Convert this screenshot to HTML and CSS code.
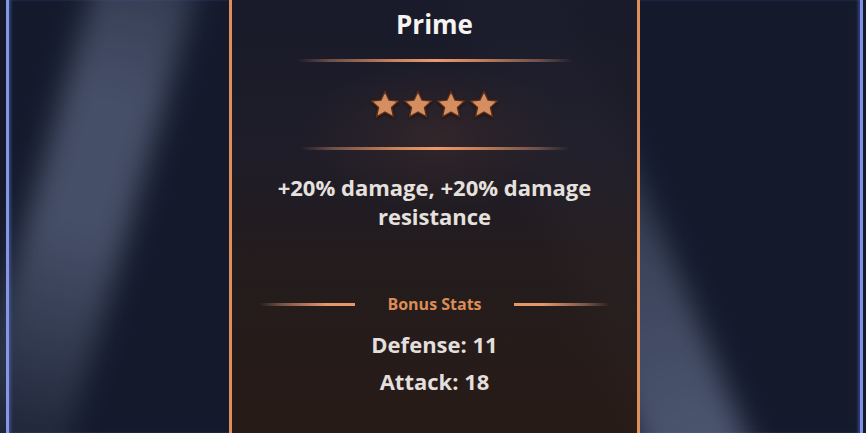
FILE: index.html
```html
<!DOCTYPE html>
<html>
<head>
<meta charset="utf-8">
<link rel="stylesheet" href="styles.css">
</head>
<body>
<div class="stage">
  <div class="beam beam-left"></div>
  <div class="beam beam-right"></div>
  <div class="frame">
    <div class="card">
      <div class="glow"></div>
      <h1 class="title">Prime</h1>
      <div class="divider"></div>
      <div class="stars">
        <svg class="star" viewBox="0 0 32 31"><polygon points="16,1.5 20.4,10.8 30.5,11.8 22.9,18.7 25.2,28.8 16,23.6 6.8,28.8 9.1,18.7 1.5,11.8 11.6,10.8"/></svg>
        <svg class="star" viewBox="0 0 32 31"><polygon points="16,1.5 20.4,10.8 30.5,11.8 22.9,18.7 25.2,28.8 16,23.6 6.8,28.8 9.1,18.7 1.5,11.8 11.6,10.8"/></svg>
        <svg class="star" viewBox="0 0 32 31"><polygon points="16,1.5 20.4,10.8 30.5,11.8 22.9,18.7 25.2,28.8 16,23.6 6.8,28.8 9.1,18.7 1.5,11.8 11.6,10.8"/></svg>
        <svg class="star" viewBox="0 0 32 31"><polygon points="16,1.5 20.4,10.8 30.5,11.8 22.9,18.7 25.2,28.8 16,23.6 6.8,28.8 9.1,18.7 1.5,11.8 11.6,10.8"/></svg>
      </div>
      <div class="divider divider-2"></div>
      <p class="desc">+20% damage, +20% damage resistance</p>
      <div class="bonus-head">
        <span class="bline bline-left"></span>
        <span class="bonus-label">Bonus Stats</span>
        <span class="bline bline-right"></span>
      </div>
      <div class="stat">Defense: 11</div>
      <div class="stat">Attack: 18</div>
    </div>
  </div>
</div>
</body>
</html>
```
FILE: styles.css
```css
* { box-sizing: border-box; }
html, body {
  margin: 0;
  padding: 0;
  background: #131a2b;
  overflow: hidden;
}
.stage {
  position: relative;
  width: 866px;
  height: 433px;
  overflow: hidden;
  background: #141a2c;
  font-family: "Open Sans", "Noto Sans", sans-serif;
}
.beam {
  position: absolute;
  pointer-events: none;
  filter: blur(14px);
}
.beam-left {
  left: 30px;
  top: -134px;
  width: 100px;
  height: 700px;
  transform: rotate(16deg);
  background: linear-gradient(180deg, rgba(110,120,150,0) 4%, rgba(110,122,152,0.4) 18%, rgba(110,122,152,0.55) 32%, rgba(110,122,152,0.55) 52%, rgba(110,122,152,0.32) 70%, rgba(110,122,152,0.05) 88%);
}
.beam-right {
  left: 550px;
  top: -134px;
  width: 100px;
  height: 700px;
  transform: rotate(-22.6deg);
  background: linear-gradient(180deg, rgba(110,122,152,0.1) 0%, rgba(110,122,152,0.16) 30%, rgba(110,122,152,0.45) 60%, rgba(110,122,152,0.62) 85%, rgba(110,122,152,0.62) 100%);
}
.frame {
  position: relative;
  margin-left: 6px;
  width: 857px;
  height: 433px;
  border-left: 3px solid #8598e6;
  border-right: 3px solid #7d92e4;
  box-shadow: inset 3px 0 3px -1px rgba(90,115,210,0.45), inset -3px 0 3px -1px rgba(90,115,210,0.45);
  display: flex;
  justify-content: center;
}
.card {
  position: relative;
  width: 411px;
  height: 433px;
  border-left: 3px solid #df8f5c;
  border-right: 3px solid #df8f5c;
  background: linear-gradient(180deg, rgba(26,27,42,0.85) 0%, rgba(32,29,40,0.87) 35%, rgba(37,28,28,0.93) 60%, rgba(40,27,22,0.97) 100%);
  display: flex;
  flex-direction: column;
  align-items: center;
  color: #e8e3df;
}
.glow {
  position: absolute;
  left: 70px;
  top: 60px;
  width: 270px;
  height: 150px;
  background: radial-gradient(ellipse at center, rgba(120,70,45,0.22), rgba(120,70,45,0) 70%);
  pointer-events: none;
}
.title {
  position: relative;
  margin: 9px 0 0;
  font-size: 26px;
  line-height: 30px;
  font-weight: 700;
  color: #f6f4f2;
}
.divider {
  position: relative;
  margin-top: 20px;
  width: 276px;
  height: 3px;
  background: linear-gradient(90deg, rgba(120,85,70,0) 0%, rgba(140,100,85,0.7) 12%, #c9825a 35%, #ea9a6c 50%, #c9825a 65%, rgba(140,100,85,0.7) 88%, rgba(120,85,70,0) 100%);
}
.divider-2 {
  margin-top: 28px;
  width: 270px;
}
.stars {
  position: relative;
  margin-top: 28px;
  display: flex;
  gap: 3px;
}
.star {
  width: 30px;
  height: 29px;
  display: block;
  filter: drop-shadow(0 1px 1px rgba(20,10,5,0.8));
}
.star polygon {
  fill: #d48e5f;
  stroke: #5a301c;
  stroke-width: 1.5;
  stroke-linejoin: round;
}
.desc {
  position: relative;
  margin: 23px 0 0;
  width: 350px;
  text-align: center;
  font-size: 22px;
  line-height: 29px;
  font-weight: 700;
  color: #e6e1de;
}
.bonus-head {
  position: relative;
  margin-top: 63px;
  display: flex;
  align-items: center;
  gap: 32px;
}
.bline {
  width: 96px;
  height: 3px;
}
.bline-left {
  background: linear-gradient(90deg, rgba(120,90,80,0) 0%, rgba(140,100,85,0.8) 25%, #e8956a 70%, #e8956a 100%);
}
.bline-right {
  background: linear-gradient(270deg, rgba(120,90,80,0) 0%, rgba(140,100,85,0.8) 25%, #e8956a 70%, #e8956a 100%);
}
.bonus-label {
  font-size: 16px;
  line-height: 20px;
  font-weight: 700;
  color: #dc8c56;
}
.stat {
  position: relative;
  margin-top: 18px;
  font-size: 22px;
  line-height: 24px;
  font-weight: 700;
  color: #e3dfdc;
}
.stat + .stat {
  margin-top: 13px;
}
```
